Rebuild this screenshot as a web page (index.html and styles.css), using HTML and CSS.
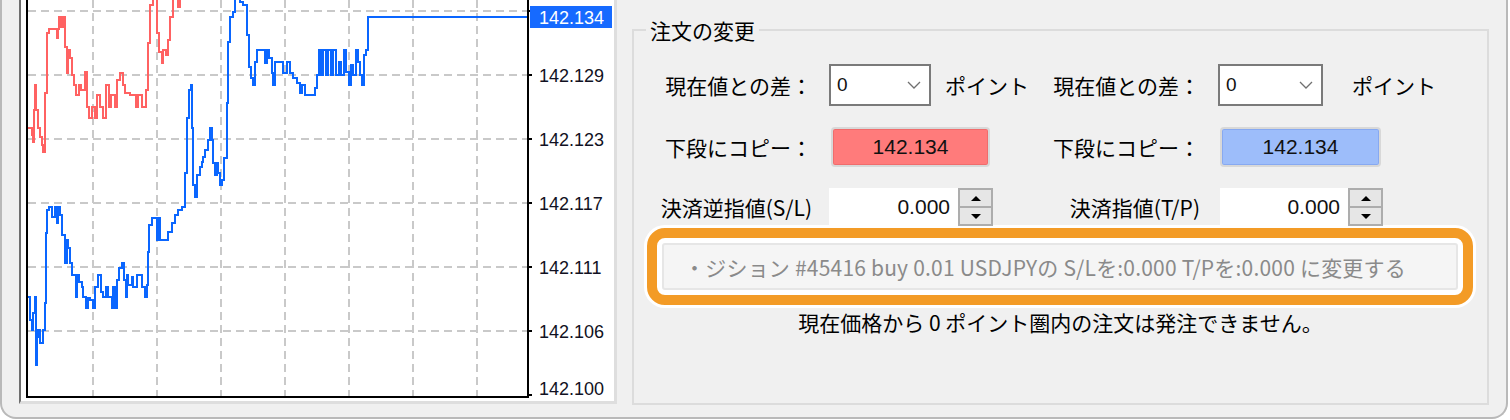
FILE: index.html
```html
<!DOCTYPE html>
<html lang="ja">
<head>
<meta charset="utf-8">
<title>注文の変更</title>
<link rel="stylesheet" href="styles.css">
</head>
<body>
<div class="window">
  <div class="chart">
    <svg class="plot" width="593" height="401" viewBox="21 0 593 401">
      <path class="grid" d="M28 11H527M28 75H527M28 139H527M28 203H527M28 267H527M28 331H527M93 0V396M157 0V396M221 0V396M285 0V396M349 0V396M413 0V396M477 0V396"/>
      <polyline class="sell" points="28,128 32,128 32,135 33,135 33,142 34,142 34,110 35,110 35,85 36,85 36,110 38,110 38,128 40,128 40,137 42,137 42,145 43,145 43,152 45,152 45,93 47,93 47,33 49,33 49,29 57,29 57,38 58,38 58,29 59,29 59,17 61,17 61,27 63,27 63,17 65,17 65,47 67,47 67,73 68,73 68,50 70,50 70,58 72,58 72,75 74,75 74,85 76,85 76,95 79,95 79,85 81,85 81,90 85,90 85,72 87,72 87,107 89,107 89,118 92,118 92,107 95,107 95,118 97,118 97,95 100,95 100,107 103,107 103,118 106,118 106,85 109,85 109,107 111,107 111,95 115,95 115,107 117,107 117,80 120,80 120,73 123,73 123,85 125,85 125,93 130,93 130,95 136,95 136,107 138,107 138,95 142,95 142,107 146,107 146,90 148,90 148,43 150,43 150,5 153,5 153,-5 157,-5 157,33 159,33 159,52 162,52 162,63 163,63 163,50 166,50 166,55 168,55 168,40 170,40 170,17 173,17 173,-5 178,-5 178,7 180,7 180,-5"/>
      <polyline class="buy" points="28,297 30,297 30,320 32,320 32,330 33,330 33,313 35,313 35,297 36,297 36,365 37,365 37,337 38,337 38,330 40,330 40,343 43,343 43,330 45,330 45,303 46,303 46,233 47,233 47,210 49,210 49,207 52,207 52,217 55,217 55,207 57,207 57,223 58,223 58,207 60,207 60,215 62,215 62,235 65,235 65,263 67,263 67,240 68,240 68,248 70,248 70,263 72,263 72,275 76,275 76,297 77,297 77,275 79,275 79,282 82,282 82,287 83,287 83,297 86,297 86,308 88,308 88,298 90,298 90,300 93,300 93,308 95,308 95,287 98,287 98,275 101,275 101,292 103,292 103,297 106,297 106,287 108,287 108,297 112,297 112,308 113,308 113,287 115,287 115,308 117,308 117,280 119,280 119,268 122,268 122,263 124,263 124,280 126,280 126,297 127,297 127,275 128,275 128,285 132,285 132,277 133,277 133,287 137,287 137,275 142,275 142,287 145,287 145,297 147,297 147,285 148,285 148,252 149,252 149,225 152,225 152,218 157,218 157,240 158,240 158,218 160,218 160,240 168,240 168,232 172,232 172,223 175,223 175,215 178,215 178,210 182,210 182,207 185,207 185,173 187,173 187,118 189,118 189,90 191,90 191,85 192,85 192,128 193,128 193,185 195,185 195,197 197,197 197,175 200,175 200,167 202,167 202,162 203,162 203,157 205,157 205,150 208,150 208,140 210,140 210,128 212,128 212,140 213,140 213,163 215,163 215,175 217,175 217,163 218,163 218,173 220,173 220,185 222,185 222,180 224,180 224,158 227,158 227,103 228,103 228,42 230,42 230,17 233,17 233,12 235,12 235,-2 240,-2 240,2 243,2 243,5 247,5 247,35 249,35 249,67 251,67 251,78 253,78 253,85 255,85 255,62 257,62 257,50 265,50 265,63 267,63 267,50 269,50 269,58 272,58 272,73 273,73 273,85 275,85 275,62 283,62 283,73 287,73 287,62 290,62 290,73 293,73 293,78 297,78 297,83 300,83 300,93 302,93 302,85 305,85 305,95 315,95 315,88 317,88 317,75 319,75 319,50 321,50 321,75 323,75 323,50 326,50 326,75 328,75 328,50 331,50 331,75 333,75 333,50 336,50 336,75 339,75 339,62 341,62 341,75 344,75 344,50 346,50 346,72 349,72 349,85 351,85 351,65 353,65 353,75 356,75 356,50 358,50 358,62 360,62 360,75 362,75 362,85 364,85 364,55 366,55 366,50 368,50 368,17 527,17"/>
      <path class="frame" d="M27 0V398M26 397H529M528 0V398"/>
      <path class="ticks" d="M529 11h3M529 75h3M529 139h3M529 203h3M529 267h3M529 331h3M529 395h3"/>
      <text class="price" x="539" y="81.5">142.129</text>
      <text class="price" x="539" y="145.5">142.123</text>
      <text class="price" x="539" y="209.5">142.117</text>
      <text class="price" x="539" y="273.5">142.111</text>
      <text class="price" x="539" y="337.5">142.106</text>
      <text class="price" x="539" y="394.5">142.100</text>
      <rect class="cur-bg" x="530" y="6" width="82" height="22"/>
      <text class="price cur" x="539" y="23.5">142.134</text>
    </svg>
  </div>

  <div class="panel">
    <fieldset class="group">
      <legend>注文の変更</legend>
      <div class="body">
        <div class="row r1">
          <span class="lbl">現在値との差：</span>
          <div class="cell">
            <div class="combo"><span>0</span><svg class="chev" width="14" height="8" viewBox="0 0 14 8"><polyline points="1,1 7,7 13,1"/></svg></div>
            <span class="unit">ポイント</span>
          </div>
          <span class="lbl lbl-r">現在値との差：</span>
          <div class="cell cell-r">
            <div class="combo"><span>0</span><svg class="chev" width="14" height="8" viewBox="0 0 14 8"><polyline points="1,1 7,7 13,1"/></svg></div>
            <span class="unit unit-wide">ポイント</span>
          </div>
        </div>

        <div class="row r2">
          <span class="lbl">下段にコピー：</span>
          <div class="cell">
            <div class="copy copy-sell">142.134</div>
          </div>
          <span class="lbl lbl-r">下段にコピー：</span>
          <div class="cell cell-r">
            <div class="copy copy-buy">142.134</div>
          </div>
        </div>

        <div class="row r3">
          <span class="lbl">決済逆指値(S/L)</span>
          <div class="cell">
            <div class="num">0.000</div>
            <div class="spin"><span><i class="tri-up"></i></span><span><i class="tri-down"></i></span></div>
          </div>
          <span class="lbl lbl-r">決済指値(T/P)</span>
          <div class="cell cell-r">
            <div class="num num-r">0.000</div>
            <div class="spin"><span><i class="tri-up"></i></span><span><i class="tri-down"></i></span></div>
          </div>
        </div>

        <div class="hl">
          <div class="exec">・ジション #45416 buy 0.01 USDJPYの S/Lを:0.000 T/Pを:0.000 に変更する</div>
        </div>

        <div class="msg">現在価格から 0 ポイント圏内の注文は発注できません。</div>
      </div>
    </fieldset>
  </div>
</div>
</body>
</html>
```

FILE: styles.css
```css
html, body {
  margin: 0;
  background: #ffffff;
}

body {
  font-family: "Noto Sans CJK JP", "Noto Sans", sans-serif;
  color: #000;
}

.window {
  width: 1508px;
  height: 419px;
  box-sizing: border-box;
  border: 2px solid #b9b9b9;
  border-top: 0;
  border-radius: 0 0 16px 16px;
  background: #f0f0f0;
  display: flex;
  padding-left: 17px;
}

/* ---------- chart ---------- */
.chart {
  flex: none;
  width: 598px;
  height: 404px;
  box-sizing: border-box;
  background: #fff;
  border-left: 2px solid #6e6e6e;
  border-right: 3px solid #dedede;
  border-bottom: 3px solid #dedede;
  overflow: hidden;
}

.plot {
  display: block;
}

.grid {
  fill: none;
  stroke: #c9c9c9;
  stroke-width: 2;
  stroke-dasharray: 8 5;
  shape-rendering: crispEdges;
}

.sell, .buy {
  fill: none;
  stroke-width: 2;
  shape-rendering: crispEdges;
}

.sell { stroke: #ff6262; }
.buy { stroke: #0a66ff; }

.frame, .ticks {
  fill: none;
  stroke: #000;
  stroke-width: 2;
  shape-rendering: crispEdges;
}

.price {
  font-family: "Liberation Sans", Arial, sans-serif;
  font-size: 18px;
  fill: #111122;
}

.cur-bg { fill: #166aff; }
.price.cur { fill: #ffffff; }

/* ---------- right panel ---------- */
.panel {
  flex: 1;
  padding: 18px 17px 0 15px;
}

.group {
  margin: 0;
  padding: 0;
  min-width: 0;
  height: 387px;
  box-sizing: border-box;
  border: 2px solid #dcdcdc;
}

.group legend {
  margin-left: 12px;
  padding: 0 4px;
  font-size: 21px;
  line-height: 24px;
}

.body {
  padding-top: 22px;
}

.row {
  display: flex;
  align-items: center;
  font-size: 21px;
  line-height: 24px;
}

.r1 { height: 42px; }
.r2 { height: 40px; margin-top: 21px; }
.r3 { height: 38px; margin-top: 21px; }

.lbl {
  flex: none;
  width: 178px;
  text-align: right;
  white-space: nowrap;
}

.lbl-r { width: 171px; }

.cell {
  flex: none;
  width: 200px;
  margin-left: 17px;
  display: flex;
  align-items: center;
}

.cell-r {
  margin-left: 18px;
  width: auto;
}

.combo {
  width: 105px;
  height: 42px;
  box-sizing: border-box;
  border: 2px solid #7a7a7a;
  background: #fff;
  display: flex;
  align-items: center;
  justify-content: space-between;
  padding: 0 8px 0 6px;
  font-family: "Liberation Sans", Arial, sans-serif;
  font-size: 19px;
  color: #111;
}

.chev polyline {
  fill: none;
  stroke: #707070;
  stroke-width: 1.3;
}

.unit { margin-left: 14px; white-space: nowrap; }
.unit-wide { margin-left: 29px; }

.copy {
  height: 40px;
  width: 159px;
  margin-left: 2px;
  box-sizing: border-box;
  border: 2px solid #d8d8d8;
  border-radius: 4px;
  display: flex;
  align-items: center;
  justify-content: center;
  font-family: "Liberation Sans", Arial, sans-serif;
  font-size: 21px;
  color: #111;
}

.copy-sell {
  background: #ff7b7b;
  box-shadow: inset 0 0 0 1px #f06c6c;
}

.copy-buy {
  width: 161px;
  background: #9dbdfa;
  box-shadow: inset 0 0 0 1px #87a9f1;
}

.num {
  width: 129px;
  height: 38px;
  box-sizing: border-box;
  background: #fff;
  display: flex;
  align-items: center;
  justify-content: flex-end;
  padding-right: 8px;
  font-family: "Liberation Sans", Arial, sans-serif;
  font-size: 21px;
  color: #111;
}

.num-r { margin-left: 2px; width: 128px; }

.spin {
  width: 35px;
  height: 38px;
  box-sizing: border-box;
  border: 2px solid #adadad;
  background: #e6e6e6;
  display: flex;
  flex-direction: column;
}

.spin span {
  flex: 1;
  display: flex;
  align-items: center;
  justify-content: center;
}

.spin span + span {
  border-top: 2px solid #adadad;
}

.tri-up, .tri-down {
  width: 0;
  height: 0;
  border-left: 5px solid transparent;
  border-right: 5px solid transparent;
}

.tri-up { border-bottom: 5px solid #000; }
.tri-down { border-top: 5px solid #000; }

/* highlighted execute button */
.hl {
  margin: 2px 14px 0 13px;
  border: 10px solid #f39b26;
  border-radius: 18px;
  background: #fff;
  padding: 5px;
  box-shadow: 0 0 0 3px #fff;
}

.exec {
  height: 47px;
  box-sizing: border-box;
  border: 2px solid #e6e6e6;
  border-radius: 3px;
  background: #f5f5f5;
  color: #8a8a8a;
  font-size: 21px;
  letter-spacing: 0.2px;
  display: flex;
  align-items: center;
  justify-content: center;
  padding-right: 30px;
  white-space: nowrap;
}

.msg {
  margin-top: 5px;
  text-align: center;
  font-size: 21px;
  line-height: 24px;
}
```
